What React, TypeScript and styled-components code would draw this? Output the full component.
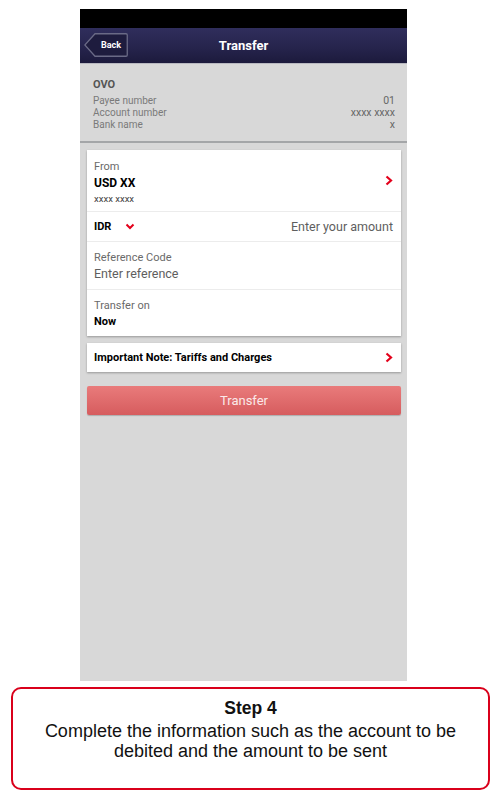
import React from 'react';
import styled, { createGlobalStyle } from 'styled-components';

const GlobalStyle = createGlobalStyle`
  html, body {
    margin: 0;
    padding: 0;
    background: #ffffff;
  }
`;

const Page = styled.div`
  width: 500px;
  padding-top: 9px;
  box-sizing: border-box;
`;

const Phone = styled.div`
  width: 327px;
  margin-left: 80px;
  height: 672px;
  display: flex;
  flex-direction: column;
  background: #d8d8d8;
  font-family: Roboto, 'Liberation Sans', Arial, sans-serif;
`;

const StatusBar = styled.div`
  height: 19px;
  background: #000000;
`;

const NavBar = styled.div`
  position: relative;
  height: 35px;
  display: flex;
  align-items: center;
  justify-content: center;
  background: linear-gradient(#302e5c, #25234b 60%, #1c1a3c);
  border-bottom: 1px solid #b8b8c0;
`;

const NavTitle = styled.div`
  color: #ffffff;
  font-weight: 700;
  font-size: 13px;
`;

const BackButton = styled.button`
  position: absolute;
  left: 4px;
  top: 5px;
  width: 44px;
  height: 24px;
  padding: 0 0 0 10px;
  border: none;
  background: none;
  color: #ffffff;
  font-family: Roboto, 'Liberation Sans', Arial, sans-serif;
  font-weight: 700;
  font-size: 9px;
  text-align: center;

  svg {
    position: absolute;
    left: 0;
    top: 0;
  }

  span {
    position: relative;
  }
`;

const Payee = styled.div`
  padding: 14px 12px 10px 13px;
  border-bottom: 2px solid #a4a6a8;
`;

const PayeeName = styled.div`
  font-size: 11px;
  font-weight: 700;
  color: #555555;
  line-height: 14px;
  margin-bottom: 3px;
`;

const PayeeRow = styled.div`
  display: flex;
  justify-content: space-between;
  font-size: 10px;
  line-height: 12px;
  color: #7a7a7a;
`;

const PayeeValue = styled.span`
  color: #666666;
  font-size: 10.5px;
`;

const Card = styled.div`
  margin: 7px 6px 0 7px;
  background: #ffffff;
  box-shadow: 0 1px 2px rgba(0, 0, 0, 0.3);
`;

const Row = styled.div<{ h: number }>`
  height: ${({ h }) => h}px;
  box-sizing: border-box;
  padding: 0 8px 0 7px;
  display: flex;
  align-items: center;
  justify-content: space-between;
  border-top: 1px solid #ececec;

  &:first-child {
    border-top: none;
  }
`;

const Stack = styled.div<{ offset?: number }>`
  display: flex;
  flex-direction: column;
  padding-top: ${({ offset }) => offset ?? 0}px;
`;

const Label = styled.div`
  font-size: 11px;
  line-height: 16px;
  color: #6a6a6a;
`;

const Strong = styled.div<{ size?: number }>`
  font-size: ${({ size }) => size ?? 11}px;
  line-height: 16px;
  font-weight: 700;
  color: #000000;
`;

const Small = styled.div`
  font-size: 9.5px;
  line-height: 15px;
  color: #444444;
`;

const Placeholder = styled.div<{ size?: number }>`
  font-size: ${({ size }) => size ?? 12.5}px;
  line-height: 16px;
  color: #5e5e5e;
`;

const Currency = styled.div`
  display: flex;
  align-items: center;
  gap: 14px;
`;

const NoteCard = styled(Card)`
  margin-top: 7px;
`;

const TransferButton = styled.button`
  margin: 14px 6px 0 7px;
  height: 29px;
  border: none;
  border-radius: 2px;
  background: linear-gradient(#e97b7b, #d65c5e);
  box-shadow: 0 1px 1px rgba(0, 0, 0, 0.2);
  color: #fbe9e9;
  font-family: Roboto, 'Liberation Sans', Arial, sans-serif;
  font-size: 13px;
`;

const Caption = styled.div`
  margin: 6px 10px 0 11px;
  height: 103px;
  box-sizing: border-box;
  border: 2px solid #d9001b;
  border-radius: 10px;
  padding-top: 8px;
  text-align: center;
  font-family: 'Liberation Sans', Arial, sans-serif;
  color: #111111;
`;

const CaptionTitle = styled.div`
  font-size: 17.5px;
  font-weight: 700;
  line-height: 22px;
`;

const CaptionText = styled.div`
  font-size: 18px;
  line-height: 20px;
  margin-top: 2px;
`;

const ChevronRight = () => (
  <svg width="8" height="11" viewBox="0 0 8 11">
    <path d="M1.5 1.5 L6 5.5 L1.5 9.5" fill="none" stroke="#e3001b" strokeWidth="2.2" />
  </svg>
);

const ChevronDown = () => (
  <svg width="10" height="7" viewBox="0 0 10 7">
    <path d="M1.5 1.5 L5 5 L8.5 1.5" fill="none" stroke="#e3001b" strokeWidth="2" />
  </svg>
);

export default function App() {
  return (
    <Page>
      <GlobalStyle />
      <Phone>
        <StatusBar />
        <NavBar>
          <BackButton>
            <svg width="44" height="24" viewBox="0 0 44 24">
              <path
                d="M11 0.75 H42 Q43.25 0.75 43.25 2 V22 Q43.25 23.25 42 23.25 H11 L0.8 12 Z"
                fill="#1e1c3e"
                stroke="#6a6a86"
                strokeWidth="1.3"
              />
            </svg>
            <span>Back</span>
          </BackButton>
          <NavTitle>Transfer</NavTitle>
        </NavBar>
        <Payee>
          <PayeeName>OVO</PayeeName>
          <PayeeRow>
            <span>Payee number</span>
            <PayeeValue>01</PayeeValue>
          </PayeeRow>
          <PayeeRow>
            <span>Account number</span>
            <PayeeValue>xxxx xxxx</PayeeValue>
          </PayeeRow>
          <PayeeRow>
            <span>Bank name</span>
            <PayeeValue>x</PayeeValue>
          </PayeeRow>
        </Payee>
        <Card>
          <Row h={61}>
            <Stack offset={3}>
              <Label>From</Label>
              <Strong size={12}>USD XX</Strong>
              <Small>xxxx xxxx</Small>
            </Stack>
            <ChevronRight />
          </Row>
          <Row h={30}>
            <Currency>
              <Strong>IDR</Strong>
              <ChevronDown />
            </Currency>
            <Placeholder>Enter your amount</Placeholder>
          </Row>
          <Row h={48}>
            <Stack offset={1}>
              <Label>Reference Code</Label>
              <Placeholder>Enter reference</Placeholder>
            </Stack>
          </Row>
          <Row h={47}>
            <Stack offset={1}>
              <Label>Transfer on</Label>
              <Strong>Now</Strong>
            </Stack>
          </Row>
        </Card>
        <NoteCard>
          <Row h={29}>
            <Strong>Important Note: Tariffs and Charges</Strong>
            <ChevronRight />
          </Row>
        </NoteCard>
        <TransferButton>Transfer</TransferButton>
      </Phone>
      <Caption>
        <CaptionTitle>Step 4</CaptionTitle>
        <CaptionText>
          Complete the information such as the account to be
          <br />
          debited and the amount to be sent
        </CaptionText>
      </Caption>
    </Page>
  );
}
